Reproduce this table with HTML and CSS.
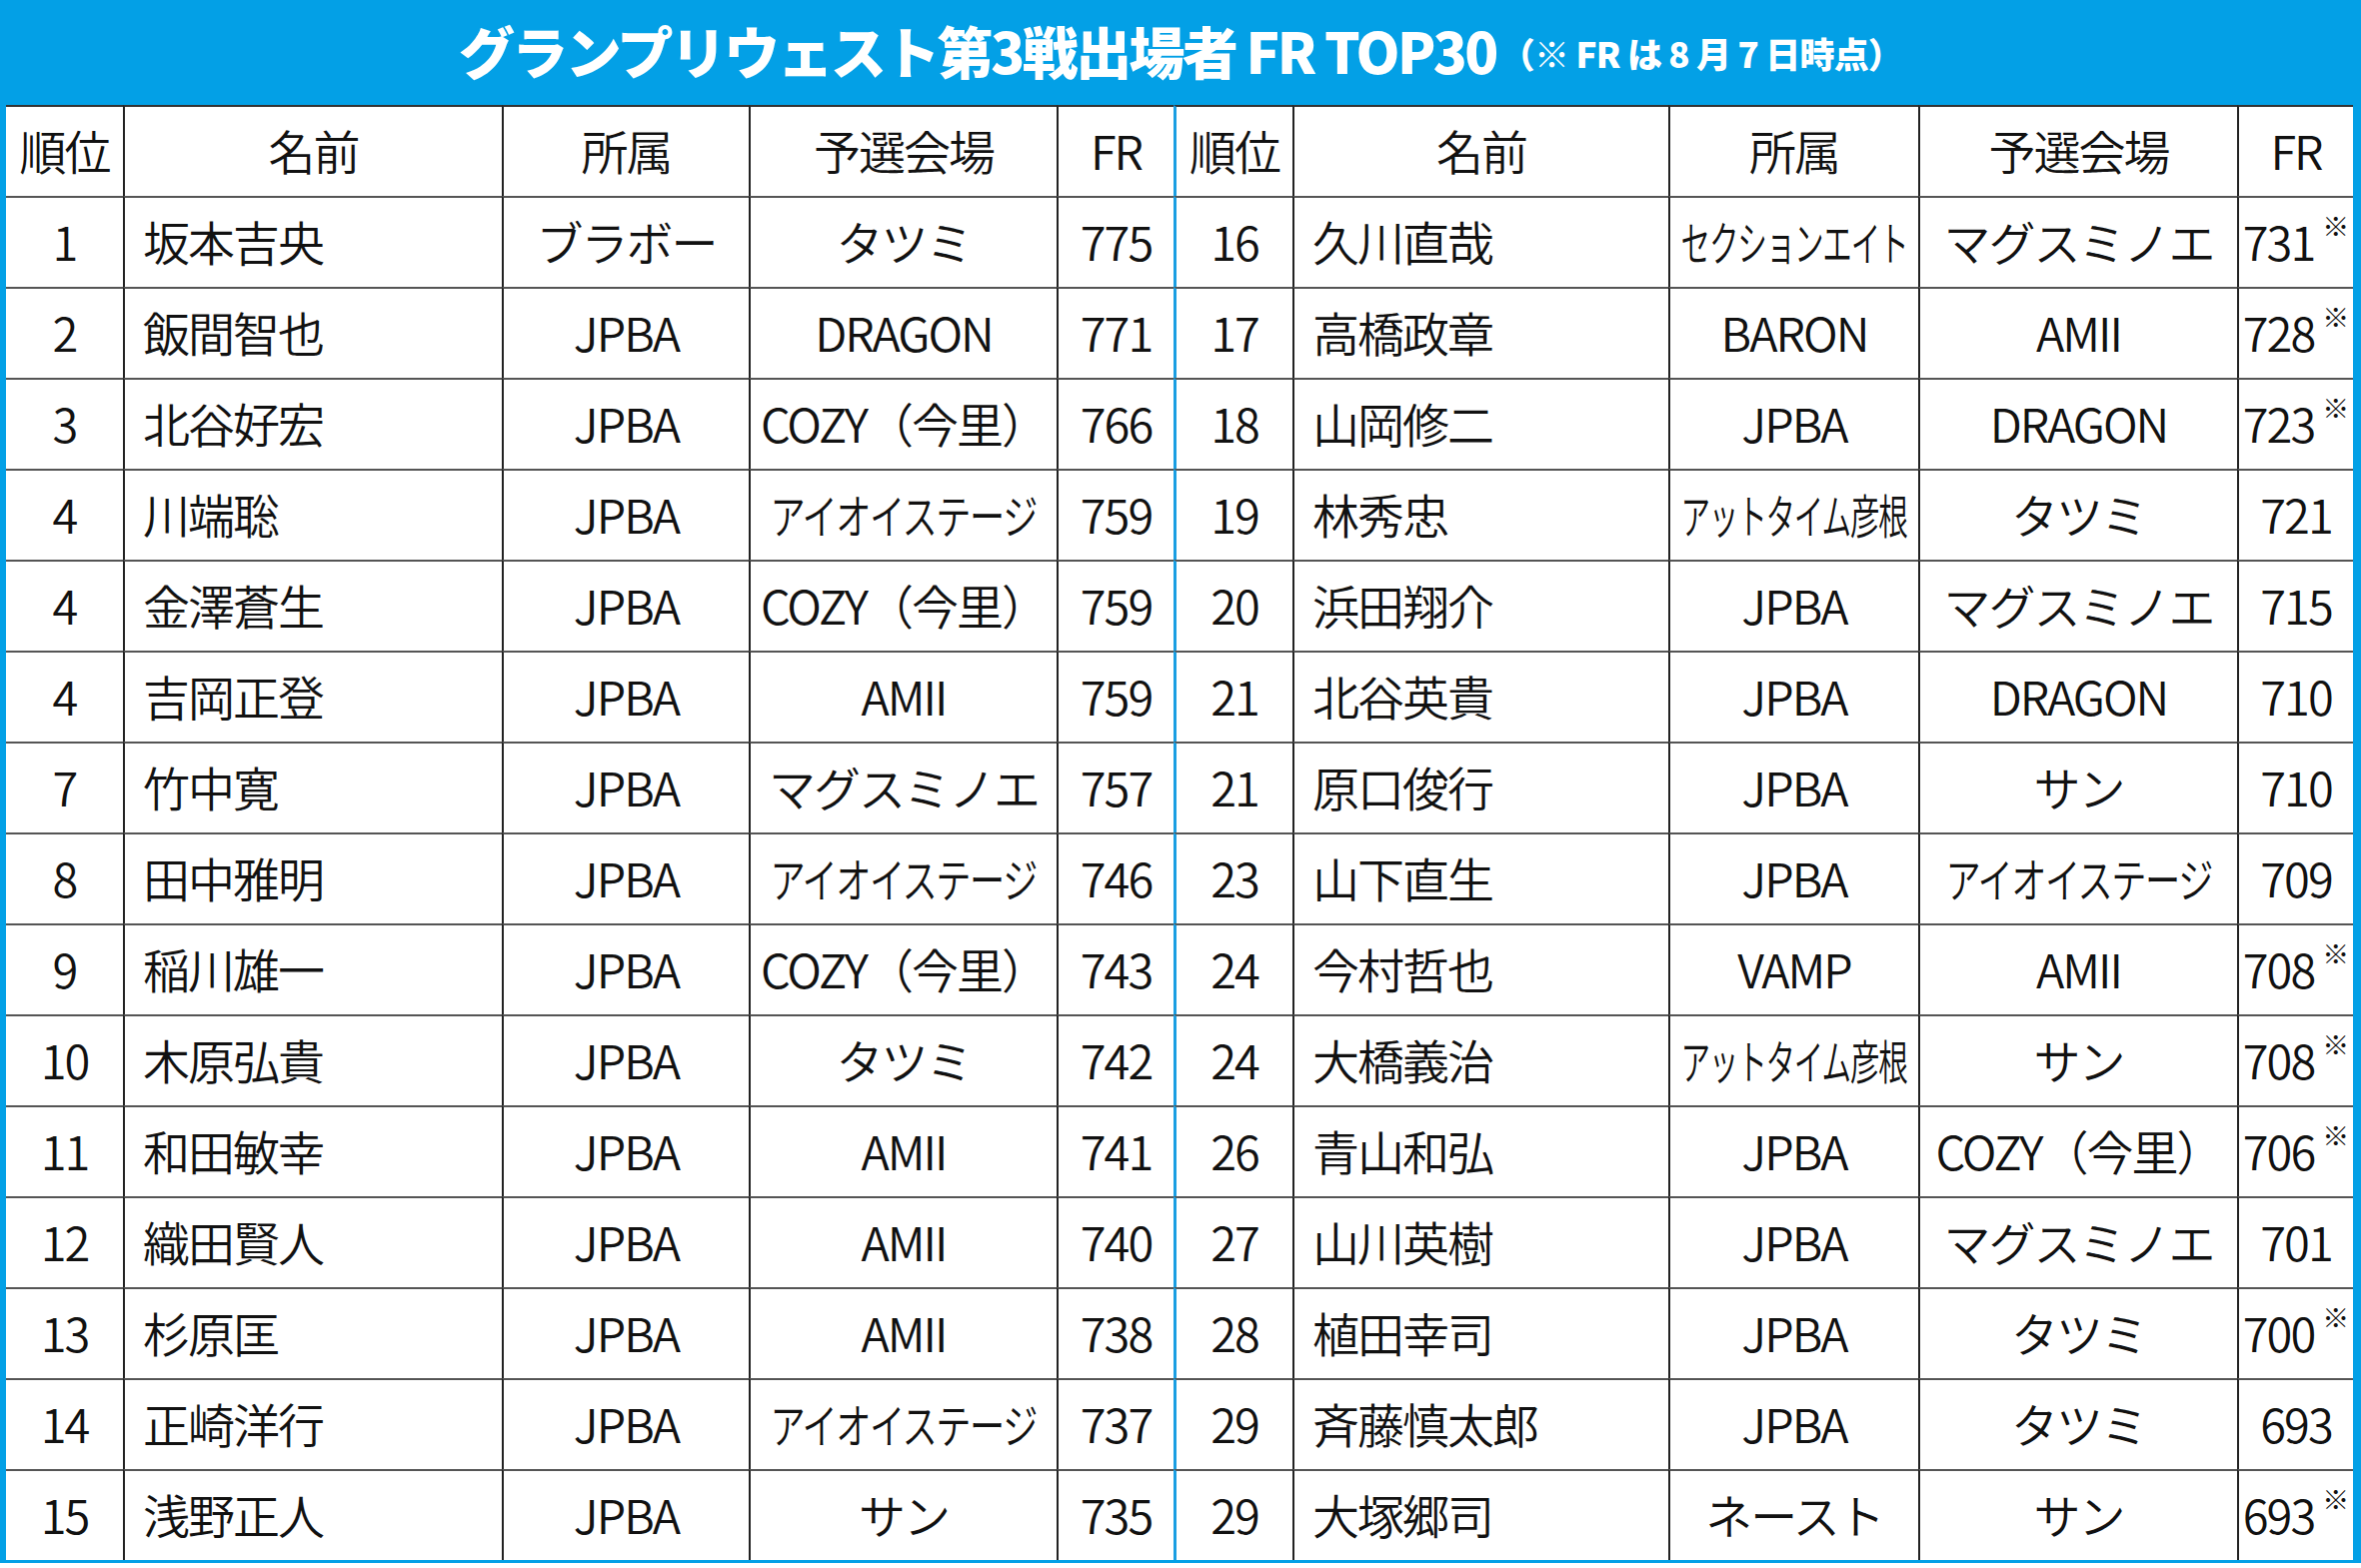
FILE: index.html
```html
<!DOCTYPE html>
<html lang="ja">
<head>
<meta charset="utf-8">
<title>グランプリウェスト第3戦出場者 FR TOP30</title>
<link rel="stylesheet" href="styles.css">
</head>
<body>
<div class="board">
  <header class="title-bar">
    <h1 class="title">グランプリウェスト第3戦出場者 FR TOP30<span class="sub">（※ FR は 8 月 7 日時点）</span></h1>
  </header>
  <div class="frame">
    <div class="grid">
      <div class="row head">
        <div class="cell rank">順位</div><div class="cell name center">名前</div><div class="cell">所属</div><div class="cell">予選会場</div><div class="cell">FR</div>
        <div class="cell rank split">順位</div><div class="cell name center">名前</div><div class="cell">所属</div><div class="cell">予選会場</div><div class="cell">FR</div>
      </div>

      <div class="row">
        <div class="cell rank">1</div><div class="cell name">坂本吉央</div><div class="cell">ブラボー</div><div class="cell">タツミ</div><div class="cell">775</div>
        <div class="cell rank split">16</div><div class="cell name">久川直哉</div><div class="cell"><span class="sq sq-62">セクションエイト</span></div><div class="cell">マグスミノエ</div><div class="cell"><span class="fr">731<span class="note">※</span></span></div>
      </div>
      <div class="row">
        <div class="cell rank">2</div><div class="cell name">飯間智也</div><div class="cell">JPBA</div><div class="cell">DRAGON</div><div class="cell">771</div>
        <div class="cell rank split">17</div><div class="cell name">高橋政章</div><div class="cell">BARON</div><div class="cell">AMII</div><div class="cell"><span class="fr">728<span class="note">※</span></span></div>
      </div>
      <div class="row">
        <div class="cell rank">3</div><div class="cell name">北谷好宏</div><div class="cell">JPBA</div><div class="cell">COZY（今里）</div><div class="cell">766</div>
        <div class="cell rank split">18</div><div class="cell name">山岡修二</div><div class="cell">JPBA</div><div class="cell">DRAGON</div><div class="cell"><span class="fr">723<span class="note">※</span></span></div>
      </div>
      <div class="row">
        <div class="cell rank">4</div><div class="cell name">川端聡</div><div class="cell">JPBA</div><div class="cell"><span class="sq sq-75">アイオイステージ</span></div><div class="cell">759</div>
        <div class="cell rank split">19</div><div class="cell name">林秀忠</div><div class="cell"><span class="sq sq-62">アットタイム彦根</span></div><div class="cell">タツミ</div><div class="cell">721</div>
      </div>
      <div class="row">
        <div class="cell rank">4</div><div class="cell name">金澤蒼生</div><div class="cell">JPBA</div><div class="cell">COZY（今里）</div><div class="cell">759</div>
        <div class="cell rank split">20</div><div class="cell name">浜田翔介</div><div class="cell">JPBA</div><div class="cell">マグスミノエ</div><div class="cell">715</div>
      </div>
      <div class="row">
        <div class="cell rank">4</div><div class="cell name">吉岡正登</div><div class="cell">JPBA</div><div class="cell">AMII</div><div class="cell">759</div>
        <div class="cell rank split">21</div><div class="cell name">北谷英貴</div><div class="cell">JPBA</div><div class="cell">DRAGON</div><div class="cell">710</div>
      </div>
      <div class="row">
        <div class="cell rank">7</div><div class="cell name">竹中寛</div><div class="cell">JPBA</div><div class="cell">マグスミノエ</div><div class="cell">757</div>
        <div class="cell rank split">21</div><div class="cell name">原口俊行</div><div class="cell">JPBA</div><div class="cell">サン</div><div class="cell">710</div>
      </div>
      <div class="row">
        <div class="cell rank">8</div><div class="cell name">田中雅明</div><div class="cell">JPBA</div><div class="cell"><span class="sq sq-75">アイオイステージ</span></div><div class="cell">746</div>
        <div class="cell rank split">23</div><div class="cell name">山下直生</div><div class="cell">JPBA</div><div class="cell"><span class="sq sq-75">アイオイステージ</span></div><div class="cell">709</div>
      </div>
      <div class="row">
        <div class="cell rank">9</div><div class="cell name">稲川雄一</div><div class="cell">JPBA</div><div class="cell">COZY（今里）</div><div class="cell">743</div>
        <div class="cell rank split">24</div><div class="cell name">今村哲也</div><div class="cell">VAMP</div><div class="cell">AMII</div><div class="cell"><span class="fr">708<span class="note">※</span></span></div>
      </div>
      <div class="row">
        <div class="cell rank">10</div><div class="cell name">木原弘貴</div><div class="cell">JPBA</div><div class="cell">タツミ</div><div class="cell">742</div>
        <div class="cell rank split">24</div><div class="cell name">大橋義治</div><div class="cell"><span class="sq sq-62">アットタイム彦根</span></div><div class="cell">サン</div><div class="cell"><span class="fr">708<span class="note">※</span></span></div>
      </div>
      <div class="row">
        <div class="cell rank">11</div><div class="cell name">和田敏幸</div><div class="cell">JPBA</div><div class="cell">AMII</div><div class="cell">741</div>
        <div class="cell rank split">26</div><div class="cell name">青山和弘</div><div class="cell">JPBA</div><div class="cell">COZY（今里）</div><div class="cell"><span class="fr">706<span class="note">※</span></span></div>
      </div>
      <div class="row">
        <div class="cell rank">12</div><div class="cell name">織田賢人</div><div class="cell">JPBA</div><div class="cell">AMII</div><div class="cell">740</div>
        <div class="cell rank split">27</div><div class="cell name">山川英樹</div><div class="cell">JPBA</div><div class="cell">マグスミノエ</div><div class="cell">701</div>
      </div>
      <div class="row">
        <div class="cell rank">13</div><div class="cell name">杉原匡</div><div class="cell">JPBA</div><div class="cell">AMII</div><div class="cell">738</div>
        <div class="cell rank split">28</div><div class="cell name">植田幸司</div><div class="cell">JPBA</div><div class="cell">タツミ</div><div class="cell"><span class="fr">700<span class="note">※</span></span></div>
      </div>
      <div class="row">
        <div class="cell rank">14</div><div class="cell name">正崎洋行</div><div class="cell">JPBA</div><div class="cell"><span class="sq sq-75">アイオイステージ</span></div><div class="cell">737</div>
        <div class="cell rank split">29</div><div class="cell name">斉藤慎太郎</div><div class="cell">JPBA</div><div class="cell">タツミ</div><div class="cell">693</div>
      </div>
      <div class="row">
        <div class="cell rank">15</div><div class="cell name">浅野正人</div><div class="cell">JPBA</div><div class="cell">サン</div><div class="cell">735</div>
        <div class="cell rank split">29</div><div class="cell name">大塚郷司</div><div class="cell">ネースト</div><div class="cell">サン</div><div class="cell"><span class="fr">693<span class="note">※</span></span></div>
      </div>
    </div>
  </div>
</div>
</body>
</html>
```
FILE: styles.css
```css
* { box-sizing: border-box; }

html, body {
  margin: 0;
  padding: 0;
  background: #ffffff;
}

body {
  font-family: "Noto Sans CJK JP", "Noto Sans", sans-serif;
  color: #111111;
}

.board {
  width: 2362px;
}

.title-bar {
  height: 105px;
  background: #03a0e6;
  display: flex;
  align-items: center;
  justify-content: center;
  padding-bottom: 5px;
}

.title {
  margin: 0;
  color: #ffffff;
  font-size: 56px;
  font-weight: 900;
  line-height: 1;
  letter-spacing: -2.6px;
  white-space: nowrap;
}

.sub {
  font-size: 35px;
  font-weight: 900;
  letter-spacing: -0.8px;
  margin-left: 4px;
  vertical-align: 6px;
}

.frame {
  background: #03a0e6;
  padding: 0 8px 3px 6px;
}

.grid {
  background: #ffffff;
}

.row {
  display: grid;
  grid-template-columns: 117px 379px 247px 308px 117px 119px 376px 250px 319px 116px;
  height: 91px;
}

.cell {
  display: flex;
  align-items: center;
  justify-content: center;
  padding-bottom: 4px;
  border-top: 2px solid #555555;
  border-left: 2px solid #222222;
  font-size: 47px;
  font-weight: 350;
  line-height: 1;
  letter-spacing: -2px;
  white-space: nowrap;
}

.head .cell {
  border-top-color: #333333;
}

.cell.rank:first-child {
  border-left: none;
}

.cell.split {
  border-left: 3px solid #1a9ee2;
}

.cell.name {
  justify-content: flex-start;
  padding-left: 18px;
}

.cell.name.center {
  justify-content: center;
  padding-left: 0;
}

.sq {
  display: inline-block;
}

.sq-62 {
  transform: scaleX(0.63);
}

.sq-75 {
  transform: scaleX(0.75);
}

.fr {
  display: inline-block;
  line-height: 1;
}

.note {
  font-size: 27px;
  line-height: 0;
  margin-left: 8px;
  vertical-align: 24px;
  letter-spacing: 0;
}
```
